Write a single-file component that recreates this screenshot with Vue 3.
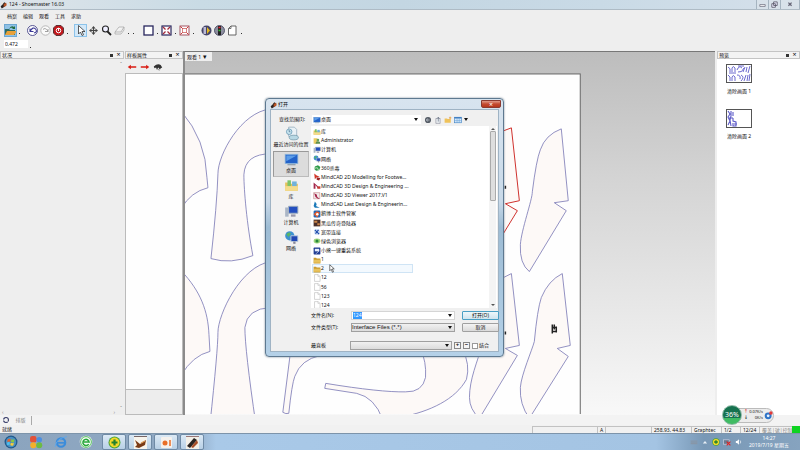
<script setup>
import { onMounted, ref } from 'vue'

const nameField = ref(null)
const fileName = ref('124')
const scale = ref('0.472')
const merge = ref(false)

const menus = ['档案', '编辑', '观看', '工具', '求助']

const art = {
  open: '<path d="M1 11V5h4l1 1h5v5z" fill="#2d6b62"/><path d="M1 11l2-4h10l-3 4z" fill="#e8a13a"/><path d="M5 5q2-4 5-2l1-1v3H8l1-1q-2-1-4 1z" fill="#256c3d"/>',
  undo: '<circle cx="6.500" cy="6.500" r="5" fill="#fff" stroke="#32307c" stroke-width=".8"/><path d="M4 8V4.500M4 7.500h3.500M4 7.500Q7 2 9.500 5T8 9" fill="none" stroke="#3a3795" stroke-width="1.100"/>',
  redo: '<circle cx="6.500" cy="6.500" r="4.700" fill="#fafafa" stroke="#aaa" stroke-width=".8"/><path d="M9 8V5M9 7.500H6M9 7Q6 3 4 5.500" fill="none" stroke="#999" stroke-width=".9"/>',
  stop: '<path d="M4 1.500h5L11.500 4v5L9 11.500H4L1.500 9V4z" fill="#c2171c" stroke="#5d3436"/><circle cx="6.500" cy="6.500" r="2.300" fill="none" stroke="#fff"/><path d="M6.500 4v3" stroke="#fff"/>',
  arrow: '<path d="M4.500 1.500v8.500l2-2 1.500 3.500 1.500-.7L8 7.500h3z" fill="#fff" stroke="#333" stroke-width=".8"/>',
  move: '<path d="M6.500 3v7M3 6.500h7" stroke="#444" stroke-width="1.200"/><path d="M4.500 4.500l2-2.500 2 2.500zM4.500 8.500l2 2.500 2-2.500zM4.500 4.500L2 6.500l2.500 2zM8.500 4.500l2.500 2-2.500 2z" fill="#444"/>',
  zoom: '<circle cx="5.500" cy="5" r="3" fill="#eef" stroke="#222" stroke-width="1.100"/><path d="M7.500 7.500l3.500 3.500" stroke="#222" stroke-width="1.800"/>',
  eraser: '<path d="M2 8l4-5h5L8 8zM2 8v2h6l3-4V3" fill="#f6f6f6" stroke="#aaa" stroke-width=".8"/>',
  window: '<rect x="2" y="2" width="9" height="9" fill="#fff" stroke="#29275e" stroke-width="1.300"/>',
  fit: '<rect x="2" y="2" width="9" height="9" fill="#fff" stroke="#29275e" stroke-width="1.200"/><path d="M3 3l2.500 2.500M10 3L7.500 5.500M3 10l2.500-2.500M10 10L7.500 7.500" stroke="#a22b3c" stroke-width="1.300"/>',
  fitred: '<rect x="2" y="2" width="9" height="9" fill="#fff" stroke="#945" stroke-width=".9"/><rect x="4.500" y="4.500" width="4" height="4" fill="none" stroke="#c66" stroke-width=".8"/><path d="M2.500 2.500l2 2M10.500 2.500l-2 2M2.500 10.500l2-2M10.500 10.500l-2-2" stroke="#c33"/>',
  layers: '<circle cx="6.500" cy="6.500" r="5" fill="#454468"/><path d="M6 3H3.500v7H6z" fill="#bab9d4"/><path d="M7 3l3 3.500L7 10z" fill="#e2b820"/>',
  lights: '<circle cx="6.500" cy="6.500" r="5" fill="#8d8fa0" stroke="#3b3b55" stroke-width=".8"/><rect x="5" y="2" width="3" height="9" fill="#222"/><path d="M5.500 3.500h2" stroke="#e23" stroke-width="1.500"/><path d="M5.500 6.500h2" stroke="#3b3" stroke-width="1.500"/>',
  page: '<path d="M5 2h5v9H2.500V4.500z" fill="#fff" stroke="#555" stroke-width=".9"/><path d="M2.500 4.500H5V2" fill="none" stroke="#555" stroke-width=".8"/>',
  left: '<path d="M1 6.500l4-3V5.500h7v2H5v2z" fill="#d91c14"/>',
  right: '<path d="M12 6.500l-4-3V5.500H1v2h7v2z" fill="#d91c14"/>',
  hat: '<path d="M1 6q5-5 9-2l2 3-2 1-1 2-2-3-2 3-1-3-2 1z" fill="#333"/><path d="M6 9l2 2" stroke="#555"/>',
  lib: '<path d="M1 4h4l1 1h6v6H1z" fill="#e7c25c"/><path d="M3 2h3v6H3z" fill="#7cc46a"/><path d="M7 3h4v5H7z" fill="#6fb2dc"/><path d="M1 7h11v4H1z" fill="#f4dc8c"/>',
  user: '<path d="M1 2h6v9H1z" fill="#eccb62"/><circle cx="8" cy="5" r="2.200" fill="#6aa25b"/><path d="M4 11q0-4 4-4t4 4z" fill="#5f8f50"/>',
  pc: '<path d="M4 2h8v6H4z" fill="#234fc0" stroke="#9ab" stroke-width=".8"/><path d="M6 9h4v2H6z" fill="#99a"/><path d="M1 3h3v8H1z" fill="#aab6c6"/>',
  net: '<circle cx="5" cy="5" r="4" fill="#3e91d0"/><path d="M2 4q2-3 4-1L4 6z" fill="#58b664"/><path d="M6 5h6v5H6z" fill="#2147b4" stroke="#bcd" stroke-width=".8"/><path d="M8 10h2v2H8z" fill="#889"/>',
  desk: '<rect x="1" y="2" width="11" height="8" fill="#2262c9" stroke="#8ab4dc" stroke-width=".7"/><path d="M2 3h9L2 8z" fill="#5c9de8"/><path d="M3 11h7" stroke="#89a"/>',
  recent: '<path d="M4 1h5l2 2v6H4z" fill="#e9f1f6" stroke="#8ba5b8" stroke-width=".6"/><circle cx="4.500" cy="5" r="2.400" fill="#c6e3ee" stroke="#5b90ae" stroke-width=".6"/><path d="M4.500 3.500V5h1" fill="none" stroke="#357" stroke-width=".5"/><ellipse cx="8.500" cy="10" rx="4" ry="2" fill="#b8d8e4" stroke="#6b93a5" stroke-width=".6"/>',
  shield: '<path d="M3 4l5-2 4 3-2 5-5 1-3-3z" fill="#2f9b4a"/><path d="M2 7l5-1 2 4" fill="none" stroke="#e9f5e0" stroke-width="1.200"/>',
  cad2: '<path d="M2 1l4 3 5 2-5 1-3 3z" fill="#d33526"/><path d="M6 7l6 1-2 4-4-1z" fill="#922"/>',
  cad3: '<path d="M1 1v10h3V5l4 5V7z" fill="#a3274b"/><path d="M7 7h5v4H7z" fill="#c43a32"/>',
  cadv: '<path d="M1 1h10v10H1z" fill="#f2e9e9" stroke="#b77" stroke-width=".8"/><path d="M2 2l4 2 1 4 4 3H8L4 8z" fill="#a3244a"/>',
  cadl: '<path d="M3 1l3 4-1 3 6 3H3L1 8z" fill="#1c7ab9"/>',
  box: '<rect x="1" y="1" width="11" height="11" rx="2" fill="#2769b5"/><path d="M1 7l5-5 5 2-4 8z" fill="#e65c2c"/><circle cx="7" cy="7" r="2" fill="#fff"/>',
  game: '<rect x="1" y="1" width="11" height="11" fill="#4a2f29"/><path d="M2 3h5v3H2zM7 7h4v3H7z" fill="#c98549"/>',
  dial: '<circle cx="6.500" cy="6.500" r="5" fill="#d4e3f7"/><path d="M3 3l7 7M9 3L4 9" stroke="#224fae" stroke-width="2"/>',
  eye: '<ellipse cx="6.500" cy="6.500" rx="5.500" ry="4" fill="#9bd57b"/><circle cx="6.500" cy="6.500" r="2.500" fill="#28883c"/>',
  tool: '<rect x="1" y="1" width="11" height="11" rx="1" fill="#223e94"/><path d="M3 3h7v4H3z" fill="#e8eefc"/><path d="M5 11l5-5" stroke="#fff"/>',
  folder: '<path d="M1 3h4l1 1h6v8H1z" fill="#c99a2e"/><path d="M2 6h10v5H1z" fill="#e8c25c"/>',
  file: '<path d="M2.500 1h6l3 3v8h-9z" fill="#fff" stroke="#b4b4b4" stroke-width=".9"/><path d="M8 1v3h3" fill="none" stroke="#b4b4b4" stroke-width=".8"/>',
  back: '<circle cx="6.500" cy="6.500" r="5" fill="#555c66"/><path d="M9 6.500H4M6 4L4 6.500 6 9" fill="none" stroke="#dfe6ee"/>',
  up: '<path d="M3 4h7v8H3z" fill="#e9edf1" stroke="#778" stroke-width=".8"/><path d="M7 9V2M5 4l2-2 2 2" fill="none" stroke="#567"/>',
  newf: '<path d="M1 4h4l1 1h5v6H1z" fill="#efc25a"/><path d="M10 1v4M8 3h4" stroke="#e08b20"/>',
  view: '<rect x="1" y="2" width="11" height="9" fill="#d7eafb" stroke="#3d80c4"/><path d="M1 3h11" stroke="#2f72bb" stroke-width="2"/><path d="M5 4v7M8.500 4v7M1 7.500h11" stroke="#5b9ad4" stroke-width=".8"/>',
  shoe: '<path d="M1 9l6-7 3 2-1 4-6 4z" fill="#2b2523"/><path d="M6 5l4-2 1 4-5 3z" fill="#b85324"/><path d="M2 2h4l-3 5z" fill="#ece5d8"/>',
  orb: '<circle cx="6.500" cy="6.500" r="6" fill="#215a8c"/><circle cx="6.500" cy="6.500" r="4.800" fill="#4a8fc0"/><path d="M3.500 4q1.500-1 2.700-.2L5.800 6.300Q4.500 5.500 3 6.500z" fill="#e8602c"/><path d="M6.800 4q1.500.8 3 0L9.300 6.500q-1.400.7-2.800 0z" fill="#8ac640"/><path d="M3 7q1.300-.8 2.600 0L5 9.500q-1-.8-2.400 0z" fill="#4cc0f0"/><path d="M6.300 7.200q1.500.8 2.900 0L8.600 9.700q-1.500.6-2.800-.2z" fill="#f8cd38"/>',
  balls: '<rect x="1" y="1" width="6" height="6" rx="2" fill="#e2523a"/><circle cx="9.500" cy="4.500" r="2.600" fill="#4d8fe0"/><circle cx="4" cy="9.500" r="2.800" fill="#f2b02c"/><circle cx="9.500" cy="9.500" r="2.800" fill="#6dbb42"/>',
  ie: '<circle cx="6.500" cy="7" r="3.900" fill="none" stroke="#3b8cdb" stroke-width="2"/><path d="M3 7.300h7" stroke="#3b8cdb" stroke-width="1.500"/><path d="M1 11Q2 3 12 1.500" fill="none" stroke="#5ea7ea" stroke-width=".9"/>',
  green: '<circle cx="6.500" cy="6.500" r="5.800" fill="#f4fbf3"/><circle cx="6.500" cy="6.500" r="5" fill="none" stroke="#3bb54a" stroke-width=".8"/><path d="M9 8.500a2.900 2.900 0 1 1 .4-2H4.500" fill="none" stroke="#28a83c" stroke-width="1.400"/>',
  guard: '<circle cx="6.500" cy="6.500" r="6" fill="#46a33a"/><circle cx="6.500" cy="6.500" r="5" fill="#f3d829"/><path d="M6.500 3.500v6M3.500 6.500h6" stroke="#23802c" stroke-width="2.200"/>',
  boot: '<rect width="13" height="13" fill="#f8f4ec"/><path d="M0 0h13v1H0z" fill="#766"/><path d="M1 4l5 4 6-4-1 5-6 3-4-1 2-2z" fill="#7a3b17"/><path d="M7 7l4-2" stroke="#dc9a55" stroke-width="1.200"/>',
  media: '<rect x="1" y="1" width="11" height="11" rx="1" fill="#f5f1ed"/><circle cx="5" cy="7" r="2.500" fill="#e86e28"/><path d="M10 4v6" stroke="#e86e28" stroke-width="1.500"/>',
  pen: '<rect width="13" height="13" fill="#f3efe7"/><path d="M0 0h13v1H0z" fill="#977"/><path d="M1 10l7-8 3 2-7 8z" fill="#2a2422"/><path d="M5 11l6-7 1 3-5 5z" fill="#a64d27"/>',
  ring: '<circle cx="6.500" cy="6.500" r="4" fill="none" stroke="#363b68" stroke-width="1.700"/><path d="M4 6.500H1M9 9l3 2" stroke="#fff" stroke-width="1.500"/>',
  keyb: '<path d="M1 4h11v2H1zM1 7h11v3H1z" fill="#8796a8"/>',
  tri: '<path d="M3 9l3.500-4L10 9z" fill="#e8eff6"/>',
  lan: '<rect x="1" y="3" width="9" height="7" fill="#697b91" stroke="#dde" stroke-width=".9"/><path d="M6 6l6 6M12 6l-6 6" stroke="#d22" stroke-width="1.800"/>',
  sound: '<path d="M3 5h2l3-3v9L5 8H3z" fill="#fff"/><path d="M10 4q2 2.500 0 5" fill="none" stroke="#fff"/>'
}

const toolGroups = [
  [['open', '打开', 1], '.'],
  [['undo', '复原'], ['redo', '重做'], ['stop', '停止'], '.'],
  [['arrow', '选择', 2], ['move', '移动'], ['zoom', '缩放'], ['eraser', '擦除'], '.', '.'],
  [['window', '视窗'], '.', ['fit', '全部'], '.', ['fitred', '选取'], '.'],
  [['layers', '图层'], ['lights', '灯号'], ['page', '页面'], '.']
]

const places = [
  ['recent', '最近访问的位置'],
  ['desk', '桌面'],
  ['lib', '库'],
  ['pc', '计算机'],
  ['net', '网络']
]

const files = [
  ['lib', '库'], ['user', 'Administrator'], ['pc', '计算机'], ['net', '网络'], ['shield', '360杀毒'],
  ['cad2', 'MindCAD 2D Modelling for Footwe...'], ['cad3', 'MindCAD 3D Design & Engineering ...'],
  ['cadv', 'MindCAD 3D Viewer 2017.V1'], ['cadl', 'MindCAD Last Design & Engineerin...'],
  ['box', '鹅博士软件管家'], ['game', '黑瓜传奇登陆器'], ['dial', '宽带连接'], ['eye', '绿色浏览器'],
  ['tool', '小熊一键重装系统'], ['folder', '1'], ['folder', '2'], ['file', '12'], ['file', '56'],
  ['file', '123'], ['file', '124']
]

const tasks = [['guard', '安全卫士'], ['boot', '鞋样'], ['media', '录像'], ['pen', 'Shoemaster']]
const pinned = [['orb', '开始'], ['balls', '程序'], ['ie', '浏览器'], ['green', '浏览']]

onMounted(() => {
  nameField.value.focus()
  nameField.value.select()
})
</script>

<template>
  <div class="app">
    <header class="titlebar">
      <svg class="ico s8" viewBox="0 0 13 13" v-html="art.shoe"></svg>
      <h1>124 - Shoemaster 16.03</h1>
      <div class="winbtns">
        <button aria-label="最小化"><svg viewBox="0 0 10 8"><path d="M2 4h6v2H2z" fill="#fff" stroke="#667" stroke-width=".8" /></svg></button>
        <button aria-label="还原"><svg viewBox="0 0 10 8"><path d="M4 1h4v4H4zM2 3h4v4H2z" fill="#eef" stroke="#556" stroke-width=".9" /></svg></button>
        <button class="wide" aria-label="关闭"><svg viewBox="0 0 10 8"><path d="M3 2l4 4M7 2L3 6" stroke="#667" stroke-width="1.600" /></svg></button>
      </div>
    </header>

    <nav class="menu">
      <button v-for="m in menus" :key="m">{{ m }}</button>
    </nav>

    <div class="tools">
      <div v-for="(g, i) in toolGroups" :key="i" class="group">
        <template v-for="(t, j) in g" :key="j">
          <span v-if="t === '.'" class="dot"></span>
          <button v-else :class="{ lit: t[2] === 1, picked: t[2] === 2 }" :aria-label="t[1]">
            <svg viewBox="0 0 13 13" v-html="art[t[0]]"></svg>
          </button>
        </template>
      </div>
    </div>
    <div class="scale">
      <input v-model="scale" aria-label="比例" /><span class="dot"></span>
    </div>

    <main class="work">
      <section class="panel status-panel">
        <div class="phead"><h2>状况</h2><i class="pin"></i><button aria-label="关闭状况">×</button></div>
        <div class="pbody">
          <span class="arr">ˆ</span>
          <span class="arr low">ˇ</span>
          <div class="hs"><span>‹</span><span>›</span></div>
        </div>
      </section>

      <section class="panel props">
        <div class="phead"><h2>样板属性</h2><i class="pin"></i><button aria-label="关闭属性">×</button></div>
        <div class="ptools">
          <button v-for="t in ['left', 'right', 'hat']" :key="t" :aria-label="t">
            <svg viewBox="0 0 13 13" v-html="art[t]"></svg>
          </button>
        </div>
        <div class="plist"></div>
        <div class="pfoot"></div>
      </section>

      <section class="view">
        <svg class="sheet" viewBox="184 52 531 363" preserveAspectRatio="xMinYMin meet">
          <rect x="183" y="74" width="397" height="342" fill="#fefefe" stroke="#666" />
          <g fill="#fdf9f7" stroke="#7776b4" stroke-width=".8">
            <path d="M180 111Q205 140 206 178L207 188Q190 192 180 209z" />
            <path d="M180 271C200 292 207 312 208 335L209 352Q192 356 180 376z" />
            <path d="M270 109C240 112 217 155 217 174Q216 205 210 259Q230 265 252 256C246 225 243 190 243 175Q244 154 270 154z" />
            <path d="M270 262C240 266 217 315 217 333Q217 350 209 425L255 425Q244 350 244 328Q246 309 270 308z" />
            <path d="M290 350L282 413Q285 415 288 414Q291 385 294 377Q300 360 320 356z" />
            <path d="M420 350Q426 362 425 378Q422 393 405 392.500Q380 393 325 384L324 389L356 394Q374 398 382 420L400 418C430 412 455 400 466 380Q470 365 462 350z" />
            <path d="M561 129L568 201L554 203L566 211L529 272Q519 264 520 245C521 230 532 200 532 192Q536 160 540 150Q545 135 561 129z" />
            <path d="M562 274L570 346L557 349L568 357L529 419Q519 405 520 388C521 375 532 350 534 342Q537 310 541 298Q548 281 562 274z" />
            <path d="M495 282L511 274L519 346L505 349L517 356L479 419Q469 410 469 398C469 380 477 362 482 345z" />
          </g>
          <path d="M495 134L511 128L519 201L505 204L517 211L495 247z" fill="#fdf9f7" stroke="#cf312d" />
          <path d="M552 325v9M554 325v5M556 327v6M552 328h4M552 332h4M505 186v3M505 332v3" stroke="#222" stroke-width="1.500" />
        </svg>
        <button class="vtab">观看 1 <span>▾</span></button>
      </section>

      <section class="panel preview">
        <div class="phead"><h2>预览</h2><i class="pin"></i><button aria-label="关闭预览">×</button></div>
        <figure>
          <svg viewBox="0 0 26 19">
            <rect x=".5" y=".5" width="25" height="18" fill="#fff" stroke="#555" />
            <path d="M2 3q3 1 2 5M6 8V4q1-3 3 0v4M11 6q2-5 5-2M12 8q4 1 6-4M19 3l-2 5M21 3l-1 5M24 2l-2 7M2 11q3 1 2 6M6 17v-4q1-3 3 0v4M11 11q4 0 3 4M15 11q4 2 0 6M20 11l-2 6M22 11l-1 6M24 10l-1 7M3 9h7M12 2h6" fill="none" stroke="#5c5ac8" stroke-width=".9" />
          </svg>
          <figcaption>清除画面 1</figcaption>
        </figure>
        <figure>
          <svg viewBox="0 0 26 19">
            <rect x=".5" y=".5" width="25" height="18" fill="#fff" stroke="#555" />
            <path d="M2 2l2 3-2 3 2 4-2 4M5 2v5l-1 4 1 6M7 3v4M7 9v3l3 1v4H7v-3M2 9h5M8 15h3" fill="none" stroke="#5c5ac8" stroke-width="1.100" />
          </svg>
          <figcaption>清除画面 2</figcaption>
        </figure>
      </section>
    </main>

    <div class="tabs">
      <svg class="ico s8" viewBox="0 0 13 13" v-html="art.ring"></svg>
      <button>排版</button>
    </div>

    <footer class="status">
      <span class="msg">就绪</span>
      <span class="c c1"></span><span class="c c2">A</span><span class="c c3"></span>
      <span class="c c4">258.93, 44.83</span><span class="c c5">Graphtec</span>
      <span class="c c6">1/2</span><span class="c c6">12/24</span>
      <span class="c c7">覆盖|號|控制</span><span class="go"></span>
    </footer>

    <footer class="taskbar">
      <button v-for="p in pinned" :key="p[0]" class="pinned" :aria-label="p[1]">
        <svg viewBox="0 0 13 13" v-html="art[p[0]]"></svg>
      </button>
      <button v-for="t in tasks" :key="t[0]" class="task" :aria-label="t[1]">
        <svg viewBox="0 0 13 13" v-html="art[t[0]]"></svg>
      </button>
      <div class="tray">
        <svg v-for="t in ['keyb', 'tri', 'guard', 'lan', 'sound']" :key="t" viewBox="0 0 13 13" v-html="art[t]"></svg>
      </div>
      <div class="clock"><span>14:27</span><span>2019/7/19 星期五</span></div>
    </footer>

    <aside class="meter">
      <strong>36%</strong>
      <div class="rates"><span><b class="r">↑</b>0.07K/s</span><span><b>↓</b>0K/s</span></div>
      <svg viewBox="0 0 13 13"><circle cx="6" cy="7" r="5" fill="#2e74c8" /><circle cx="6" cy="7" r="2" fill="#e8f2ff" /><circle cx="10" cy="3" r="2.500" fill="#e33a3a" /></svg>
    </aside>

    <section class="dialog" role="dialog" aria-label="打开">
      <div class="dhead">
        <svg class="ico s8" viewBox="0 0 13 13" v-html="art.shoe"></svg>
        <h2>打开</h2>
        <button aria-label="关闭">×</button>
      </div>
      <form class="dbody" @submit.prevent>
        <div class="look">
          <label for="look">查找范围(I):</label>
          <div class="combo flat">
            <svg class="ico s8" viewBox="0 0 13 13" v-html="art.desk"></svg>
            <select id="look"><option>桌面</option></select>
          </div>
          <div class="nav">
            <button v-for="t in ['back', 'up', 'newf', 'view']" :key="t" type="button" :aria-label="t">
              <svg viewBox="0 0 13 13" v-html="art[t]"></svg>
            </button>
            <span class="tri"></span>
          </div>
        </div>
        <div class="mid">
          <div class="places">
            <button v-for="(p, i) in places" :key="p[0]" type="button" :class="{ on: i === 1 }">
              <svg viewBox="0 0 13 13" v-html="art[p[0]]"></svg>{{ p[1] }}
            </button>
          </div>
          <div class="right">
            <div class="files">
              <ul>
                <li v-for="(f, i) in files" :key="i" :class="{ hover: i === 15 }">
                  <svg viewBox="0 0 13 13" v-html="art[f[0]]"></svg><span>{{ f[1] }}</span>
                  <svg v-if="i === 15" class="cursor" viewBox="0 0 8 12"><path d="M1 1v8l2-2 1.500 4 1.500-.6L4.500 6.500H7z" fill="#fff" stroke="#222" stroke-width=".8" /></svg>
                </li>
              </ul>
              <div class="scroll"><i class="u"></i><b></b><i class="d"></i></div>
            </div>
            <div class="fields">
              <label for="fname">文件名(N):</label>
              <div class="combo"><input id="fname" ref="nameField" v-model="fileName" /><span class="tri"></span></div>
              <button class="btn main">打开(O)</button>
              <label for="ftype">文件类型(T):</label>
              <div class="combo grey"><select id="ftype"><option>Interface Files (*.*)</option></select></div>
              <button class="btn" type="button">取消</button>
            </div>
            <div class="extra">
              <label for="board">最直板</label>
              <div class="combo grey"><select id="board"><option></option></select></div>
              <button type="button" class="sq" aria-label="加">+</button>
              <button type="button" class="sq" aria-label="减">−</button>
              <label class="chk"><input v-model="merge" type="checkbox" />结合</label>
            </div>
          </div>
        </div>
      </form>
    </section>
  </div>
</template>

<style>
body { margin: 0; }
</style>

<style scoped>
* { box-sizing: border-box; }
.app {
  position: relative;
  display: flex;
  flex-direction: column;
  min-height: 100vh;
  background: #eeeeee;
  color: #111;
  font: 5px/7px "Noto Sans", "Noto Sans CJK SC", sans-serif;
}
button, input, select { font: inherit; color: inherit; margin: 0; padding: 0; border: 0; background: none; outline: none; min-width: 0; border-radius: 0; }
h1, h2, ul, figure { margin: 0; padding: 0; font: inherit; }
svg { display: block; }
.s8 { width: 8px; height: 8px; flex: none; }

.titlebar { display: flex; align-items: center; height: 10px; background: linear-gradient(90deg, #dfe5ea, #c9dbe5 25%, #c3d6e2 50%, #c9dae6 75%, #d5e0ea); border-bottom: 1px solid #aebbc5; }
.titlebar h1 { margin-left: 1px; line-height: 9px; }
.winbtns { display: flex; margin-left: auto; height: 9px; }
.winbtns button { width: 12px; padding: 0 1px; border-left: 1px solid #a5b4c0; background: #d8e2ea; }
.winbtns .wide { width: 20px; padding: 0 5px; border-right: 1px solid #a5b4c0; }

.menu { display: flex; height: 12px; padding-left: 7px; gap: 6px; align-items: center; }
.tools { display: flex; height: 16px; align-items: center; }
.group { display: flex; align-items: center; padding-left: 4px; }
.group:nth-child(4) { padding-left: 6px; }
.group button { width: 13px; height: 13px; }
.group button.lit { background: #8ec1e6; outline: 1px solid #6da7d2; outline-offset: -1px; }
.group button.picked { background: #d3e8f8; outline: 1px solid #8cc3ea; outline-offset: -1px; }
.dot { width: 5px; height: 7px; display: flex; align-items: flex-end; justify-content: center; }
.dot::after { content: ""; width: 1px; height: 1px; background: #333; }
.scale { display: flex; height: 13px; padding: 2px 0 3px 4px; align-items: center; }
.scale input { width: 24px; height: 8px; padding-left: 1px; background: #fff; }

.work { flex: 1; display: flex; background: #eeeeee; }
.panel { display: flex; flex-direction: column; flex: none; }
.phead { display: flex; align-items: center; height: 8px; border: 1px solid #c4c4c4; background: #f3f3f3; padding: 0 1px; }
.phead h2 { flex: 1; }
.phead button { width: 7px; line-height: 6px; font-size: 7px; color: #111; }
.pin { width: 3px; height: 3px; margin-right: 2px; background: #333; }
.status-panel { width: 124px; }
.pbody { flex: 1; display: grid; grid-template-rows: 1fr auto auto; color: #888; padding-top: 2px; }
.arr { justify-self: end; padding-right: 2px; }
.low { line-height: 4px; }
.hs { display: flex; justify-content: space-between; padding: 0 9px 0 2px; line-height: 5px; }
.props { width: 58px; margin-left: 1px; }
.ptools { display: flex; height: 14px; padding-top: 1px; }
.ptools button { width: 13px; height: 13px; padding: 2px; }
.ptools svg { width: 10px; height: 10px; }
.plist { flex: 1; background: #fefefe; border: 1px solid #bbb; }
.pfoot { height: 25px; background: #ededed; border: 1px solid #bbb; border-top: 0; }

.view { flex: 1; position: relative; overflow: hidden; background: linear-gradient(#bdbdbd, #d4d4d4 35%, #f8f8f8); border-left: 2px solid #8b8b8b; border-top: 1px solid #777; min-width: 0; }
.sheet { width: 100%; height: auto; }
.vtab { position: absolute; left: 0; top: 0; width: 27px; height: 9px; padding-left: 2px; background: #eee; text-align: left; }
.vtab span { font-size: 7px; margin-left: 1px; }
.preview { width: 83px; margin-left: 2px; background: #fff; }
.preview .phead { margin-bottom: 5px; }
figure { width: 46px; height: 45px; }
figure svg { width: 26px; height: 19px; margin-left: 9px; }
figcaption { margin-top: 5px; padding-left: 10px; white-space: nowrap; }

.tabs { display: flex; height: 10px; padding-left: 2px; align-items: center; background: #f3f3f3; }
.tabs button { width: 22px; height: 9px; color: #888; border-right: 1px solid #aaa; }
.status { display: flex; height: 8px; align-items: center; background: #f1f1f1; }
.status span { line-height: 6px; white-space: nowrap; flex: none; }
.status .msg { flex: 1; padding-left: 2px; }
.c { height: 7px; border: 1px solid #c2c2c2; border-width: 1px 0 0 1px; padding-left: 2px; }
.c1 { width: 65px; }
.c2 { width: 8px; }
.c3 { width: 46px; }
.c4 { width: 40px; }
.c5 { width: 30px; }
.c6 { width: 19px; }
.c7 { width: 33px; color: #888; }
.go { width: 8px; height: 7px; background: #0ed321; }

.taskbar { display: flex; height: 17px; align-items: center; background: linear-gradient(90deg, #8ba4be, #90a9c4 24%, #a9c9e8 27%, #a4c4e3 82%, #7898b6 88%, #86a3bf); border-top: 1px solid #7d94aa; }
.pinned { width: 25px; height: 16px; padding: 1px 5px 1px 4px; }
.pinned svg { width: 14px; height: 14px; }
.task { width: 24px; height: 16px; margin-left: 2px; display: grid; place-items: center; background: linear-gradient(#dbe9f5, #b8d0e6); border: 1px solid #6f8aa5; border-radius: 2px; }
.task svg { width: 13px; height: 13px; }
.tray { display: flex; gap: 3px; margin-left: auto; }
.tray svg { width: 8px; height: 8px; }
.clock { width: 58px; padding-right: 4px; display: flex; flex-direction: column; align-items: center; color: #fff; white-space: nowrap; }

.meter { position: absolute; right: 26px; bottom: 25px; z-index: 1; display: flex; align-items: center; height: 20px; width: 52px; }
.meter::before { content: ""; position: absolute; left: 8px; right: 0; top: 3px; bottom: 2px; background: #ececec; border: 1px solid #bbb; border-radius: 8px; z-index: -1; }
.meter strong { width: 20px; height: 20px; border-radius: 10px; background: linear-gradient(#16724f 65%, #3fbb63 65%); border: 1px solid #8db9a5; color: #fff; font-size: 7px; line-height: 18px; text-align: center; font-weight: 400; }
.rates { flex: 1; display: flex; flex-direction: column; padding-left: 2px; font-size: 4px; line-height: 6px; }
.rates span { display: flex; justify-content: space-between; padding-right: 1px; }
.rates .r { color: #d33; }
.meter svg { width: 9px; height: 9px; margin-right: 1px; }

.dialog { position: absolute; left: 265px; top: 98px; width: 239px; height: 259px; display: flex; flex-direction: column; padding: 1px 4px 4px; border: 1px solid #5e7990; border-radius: 4px; background: linear-gradient(#d8e4ef, #c9d9e8 40%, #9dbcd4 50%, #b5d1e8); box-shadow: 0 0 2px #6a7c8c; }
.dhead { display: flex; height: 9px; align-items: center; }
.dhead h2 { flex: 1; }
.dhead button { width: 20px; height: 8px; margin-right: -2px; align-self: flex-start; background: linear-gradient(#e09a8a, #c44a30 50%, #b5361d); color: #fff; border: 1px solid #8b3a30; border-radius: 0 0 2px 2px; line-height: 5px; font-size: 7px; }
.dbody { flex: 1; display: flex; flex-direction: column; background: #f0f0f0; border: 1px solid #9fb3c4; padding: 4px 1px 0 2px; min-height: 0; }
.look { display: flex; height: 11px; align-items: center; }
.look label { width: 32px; text-align: right; margin-right: 7px; white-space: nowrap; }
.combo { display: flex; align-items: center; height: 9px; background: #fff; border: 1px solid #d5d5d5; }
.combo.flat { width: 109px; border-color: #fff; }
.combo select { appearance: none; flex: 1; height: 7px; width: 100%; }
.combo::after, .tri { content: ""; border: 2px solid transparent; border-top: 3px solid #111; border-bottom: 0; margin-right: 2px; flex: none; }
.combo:has(.tri)::after { display: none; }
.combo.grey { background: linear-gradient(#f1f1f1, #dcdcdc); border-color: #a0a0a0; }
.nav { display: flex; align-items: center; gap: 2px; margin-left: 3px; }
.nav button { width: 8px; height: 8px; }
.mid { flex: 1; display: flex; min-height: 0; }
.places { width: 36px; margin-right: 2px; flex: none; }
.places button { width: 36px; height: 26px; display: flex; flex-direction: column; align-items: center; white-space: nowrap; border: 1px solid transparent; }
.places button svg { width: 15px; height: 15px; flex: none; }
.places .on { background: #dcdcdc; border-color: #999 #bbb #bbb #999; }
.right { flex: 1; display: flex; flex-direction: column; min-width: 0; }
.files { display: flex; height: 182px; margin-top: 1px; background: #fff; overflow: hidden; }
.files ul { flex: 1; list-style: none; display: grid; height: 183px; grid-auto-rows: 1fr; padding-left: 1px; margin-top: 1px; }
.files li { display: flex; align-items: center; width: 101px; min-height: 0; white-space: nowrap; border: 1px solid transparent; position: relative; }
.files li svg { width: 8px; height: 8px; flex: none; }
.files li.hover { background: #f3f9fe; border-color: #cfe4f5; }
.files li .cursor { position: absolute; left: 16px; top: -1px; width: 6px; height: 9px; z-index: 1; }
.scroll { width: 7px; display: flex; flex-direction: column; align-items: center; justify-content: space-between; background: #f4f4f4; padding: 2px 0; margin-right: 1px; }
.scroll b { width: 6px; height: 70px; border: 1px solid #aaa; background: #dedede; margin-bottom: auto; margin-top: 1px; border-radius: 1px; }
.scroll i { width: 0; border: 2px solid transparent; }
.scroll .u { border-bottom-color: #555; border-top: 0; }
.scroll .d { border-top-color: #555; border-bottom: 0; }
.fields { display: grid; grid-template-columns: 40px 104px 37px; grid-auto-rows: 9px; row-gap: 3px; padding-top: 3px; align-items: center; }
.fields label { white-space: nowrap; }
.fields input { flex: 1; height: 7px; padding-left: 1px; }
.fields input::selection { background: #3399ff; color: #fff; }
.fields .combo.grey { font: 6px/7px "Liberation Sans", sans-serif; }
.btn { margin-left: 7px; width: 37px; height: 9px; line-height: 7px; border: 1px solid #a0a0a0; border-radius: 1px; background: linear-gradient(#f4f4f4, #dadada); }
.btn.main { border-color: #4a9fc4; background: linear-gradient(#eef7fb, #cfe4ee); }
.extra { display: flex; align-items: center; margin-top: 9px; }
.extra > label:first-child { width: 39px; }
.extra .combo { width: 102px; margin-right: 2px; }
.sq { width: 7px; height: 7px; border: 1px solid #888; line-height: 5px; margin-right: 2px; background: #f4f4f4; font-size: 6px; font-weight: 700; }
.chk { display: flex; align-items: center; }
.chk input { appearance: none; width: 6px; height: 6px; border: 1px solid #999; background: #fff; margin-right: 1px; }
</style>
